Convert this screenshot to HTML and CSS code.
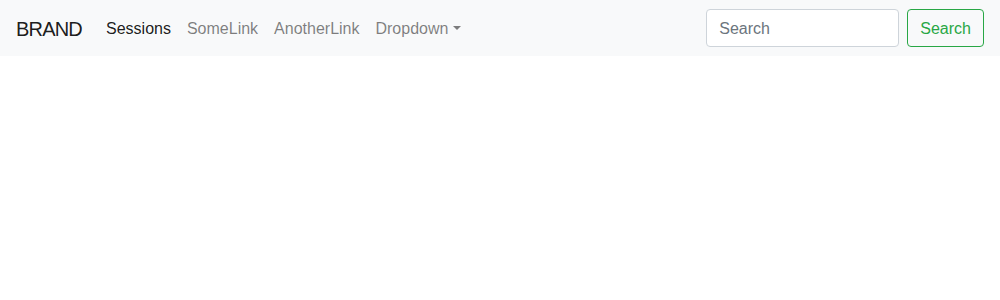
FILE: index.html
```html
<!DOCTYPE html>
<html>
<head>
<meta charset="utf-8">
<link rel="stylesheet" href="styles.css">
</head>
<body>
<nav class="navbar">
  <a class="brand" href="#">BRAND</a>
  <ul class="nav">
    <li><a class="nav-link active" href="#">Sessions</a></li>
    <li><a class="nav-link" href="#">SomeLink</a></li>
    <li><a class="nav-link" href="#">AnotherLink</a></li>
    <li><a class="nav-link dropdown" href="#">Dropdown</a></li>
  </ul>
  <form class="search-form">
    <input class="search-input" type="search" placeholder="Search">
    <button class="search-btn" type="button">Search</button>
  </form>
</nav>
</body>
</html>
```
FILE: styles.css
```css
* { box-sizing: border-box; }
body {
  margin: 0;
  font-family: "Liberation Sans", Arial, sans-serif;
  font-size: 16px;
  line-height: 1.5;
  color: #212529;
  background: #fff;
}
.navbar {
  display: flex;
  align-items: center;
  padding: 8px 16px;
  background: #f8f9fa;
  height: 56px;
}
.brand {
  padding: 6px 0 4px;
  margin-right: 16px;
  font-size: 20px;
  line-height: 30px;
  letter-spacing: -0.8px;
  color: rgba(0,0,0,.9);
  text-decoration: none;
}
.nav {
  display: flex;
  list-style: none;
  margin: 0;
  padding: 0;
  flex: 1;
}
.nav-link {
  display: block;
  padding: 9px 8px 7px;
  color: rgba(0,0,0,.5);
  text-decoration: none;
}
.nav-link.active { color: rgba(0,0,0,.9); }
.dropdown::after {
  content: "";
  display: inline-block;
  margin-left: .255em;
  vertical-align: .255em;
  border-top: .3em solid;
  border-right: .3em solid transparent;
  border-left: .3em solid transparent;
}
.search-form {
  display: flex;
  align-items: center;
}
.search-input {
  width: 193px;
  height: 38px;
  padding: 7px 12px 5px;
  font-family: inherit;
  font-size: 16px;
  color: #495057;
  background: #fff;
  border: 1px solid #ced4da;
  border-radius: 4px;
  margin-right: 8px;
}
.search-input::placeholder { color: #6c757d; }
.search-btn {
  height: 38px;
  padding: 7px 12px 5px;
  font-family: inherit;
  font-size: 16px;
  color: #28a745;
  background: transparent;
  border: 1px solid #28a745;
  border-radius: 4px;
}
```
